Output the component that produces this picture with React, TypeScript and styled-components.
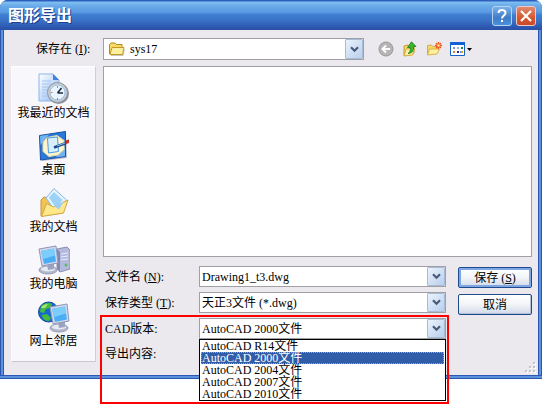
import React, { useState } from "react";
import styled, { createGlobalStyle } from "styled-components";

const GlobalStyle = createGlobalStyle`
  *, *::before, *::after { box-sizing: border-box; }
  body { margin: 0; background: #fff; }
  body, button, input, select {
    font-family: "Liberation Serif", "Noto Sans CJK SC", serif;
    font-size: 12px;
    line-height: 16px;
    color: #000;
  }
`;

const Page = styled.div`
  min-height: 100vh;
  background: #fff;
`;

const Dialog = styled.main`
  padding: 0 4px 4px;
  border-radius: 8px 8px 0 0;
  background: linear-gradient(90deg, #2a55b0 0 1px, #5c92dd 1px 3px, #2c58b4 3px calc(100% - 3px), #5c92dd calc(100% - 3px) calc(100% - 1px), #2a55b0 calc(100% - 1px));
  box-shadow: inset 0 -1px #2a55b0, inset 0 -3px #5c92dd, inset 0 -4px #2c58b4;
`;

const TitleBar = styled.header`
  display: flex;
  align-items: center;
  gap: 4px;
  height: 30px;
  margin: 0 -4px;
  padding: 2px 6px 0 8px;
  border-radius: 8px 8px 0 0;
  background: linear-gradient(#2c5ec0 0 1px, #7fc0f0 2px, #69a9e8 6px, #5a9be4 12px, #3d7dd0 15px, #3a74c8 20px, #2f5cb4 26px, #2a4fa4);
`;

const Title = styled.h1`
  flex: 1;
  margin: 0;
  font-size: 16px;
  line-height: 20px;
  font-weight: 700;
  color: #fff;
  text-shadow: 1px 1px #1d3f8c;
`;

const CaptionButton = styled.button<{ $close?: boolean }>`
  display: grid;
  place-items: center;
  width: 20px;
  height: 20px;
  padding: 0;
  border: 1px solid ${(p) => (p.$close ? "#f0c8c4" : "#b4d4f4")};
  border-radius: 3px;
  background: ${(p) => (p.$close ? "linear-gradient(#e08a70, #d8562c 60%, #c8492a)" : "linear-gradient(#7cb0e8, #3f7cc8 60%, #4a90dc)")};
`;

const Body = styled.div`
  display: flex;
  flex-direction: column;
  gap: 6px;
  padding: 8px 6px 11px 7px;
  background: #ebe9ed;
`;

const Toolbar = styled.div`
  display: flex;
  align-items: center;
  height: 22px;
`;

const LookInLabel = styled.label`
  width: 92px;
  padding-left: 25px;
  white-space: nowrap;
`;

const LookInCell = styled.div`
  flex: 1;
`;

const Tools = styled.div`
  display: flex;
  gap: 4px;
  width: 168px;
  padding-left: 12px;
`;

const ToolButton = styled.button<{ $wide?: boolean }>`
  display: grid;
  place-items: center;
  width: ${(p) => (p.$wide ? "26px" : "20px")};
  height: 20px;
  padding: 0;
  border: 0;
  background: none;
`;

const Columns = styled.div`
  display: flex;
  align-items: flex-start;
  gap: 7px;
`;

const Places = styled.nav`
  display: flex;
  flex-direction: column;
  gap: 8px;
  width: 85px;
  padding: 6px 0 11px;
  border: 1px solid #fff;
  border-right-color: #d0ced6;
  border-bottom-color: #c8c6ce;
  background: #f8f7fc;
`;

const Place = styled.a`
  display: flex;
  flex-direction: column;
  align-items: center;
  height: 49px;
  color: #000;
  text-decoration: none;
  white-space: nowrap;

  svg { flex: none; }
`;

const Content = styled.div`
  flex: 1;
  min-width: 0;
`;

const FileList = styled.div`
  height: 191px;
  border: 1px solid #a0a0a4;
  background: #fff;
`;

const Form = styled.form`
  display: flex;
  gap: 12px;
  padding-top: 9px;
`;

const Fields = styled.div`
  flex: 1;
  display: flex;
  flex-direction: column;
  gap: 5px;
`;

const Row = styled.div`
  display: flex;
  align-items: center;
  height: 21px;
`;

const RowLabel = styled.label`
  width: 96px;
  padding-left: 2px;
  white-space: nowrap;
`;

const Buttons = styled.div`
  display: flex;
  flex-direction: column;
  gap: 6px;
  width: 74px;
  padding-top: 1px;
`;

const ActionButton = styled.button<{ $primary?: boolean }>`
  height: 21px;
  padding: 0;
  border: 1px solid #1f4a8c;
  border-radius: 2px;
  background: linear-gradient(#fff, #f2f4f8 50%, #d0dae8);
  box-shadow: ${(p) => (p.$primary ? "inset 0 0 0 2px #7fa6e4" : "inset -1px -1px #b0c0d8")};
`;

const Combo = styled.div<{ $icon?: boolean }>`
  position: relative;
  flex: 1;
  display: grid;
  grid-template-columns: 1fr 18px;
  height: ${(p) => (p.$icon ? "22px" : "21px")};
  border: 1px solid #a0a0a4;
  background: #fff;

  > select, > input, > button {
    grid-area: 1 / 1 / 2 / 3;
    width: 100%;
    min-width: 0;
    padding: 0 20px 0 ${(p) => (p.$icon ? "26px" : "2px")};
    border: 0;
    outline: 0;
    appearance: none;
    background: transparent;
    text-align: left;
  }

  > svg {
    grid-area: 1 / 1;
    place-self: center start;
    margin-left: 4px;
    pointer-events: none;
  }
`;

const Arrow = styled.span`
  grid-area: 1 / 2;
  display: grid;
  place-items: center;
  border: 1px solid #a8bcd8;
  border-radius: 1px;
  background: linear-gradient(135deg, #eaf3fd, #b9cfec);
  pointer-events: none;
`;

const VersionArea = styled.div`
  position: relative;
  display: flex;
  flex-direction: column;
  gap: 4px;
`;

const Highlight = styled.div`
  position: absolute;
  inset: -3px -3px -40px -3px;
  border: 2px solid #f00;
  pointer-events: none;
`;

const Options = styled.ul`
  position: absolute;
  top: 20px;
  left: -1px;
  right: -1px;
  margin: 0;
  padding: 0;
  border: 1px solid #000;
  background: #fff;
  list-style: none;
`;

const Option = styled.li<{ $selected: boolean }>`
  height: 12px;
  margin: 0 1px;
  padding: 0 1px;
  line-height: 12px;
  color: ${(p) => (p.$selected ? "#fff" : "#000")};
  background: ${(p) => (p.$selected ? "#315ca8" : "#fff")};
  outline: ${(p) => (p.$selected ? "1px dotted #d0a050" : "none")};
  outline-offset: -1px;
`;

const Grip = styled.svg`
  position: absolute;
  right: 1px;
  bottom: 1px;
`;

const Frame = styled.div`
  position: relative;
`;

const ArrowGlyph = () => (
  <Arrow>
    <svg width="9" height="7" viewBox="0 0 9 7">
      <path d="M1 1.2 4.5 4.7 8 1.2" fill="none" stroke="#49597a" strokeWidth="2.2" />
    </svg>
  </Arrow>
);

const FolderIcon = () => (
  <svg width="18" height="16" viewBox="0 0 18 16">
    <path d="M1.500 13V3.500L3 2h4l1.500 1.500H14V6" fill="#f8d968" stroke="#b88a1c" />
    <path d="M2 13.500 4 6.500h12L14.500 13.500z" fill="#fff0a0" stroke="#c79a22" />
    <path d="M3 14.500h12l1.500-6" fill="none" stroke="#8d8b83" opacity=".5" />
  </svg>
);

const BackIcon = () => (
  <svg width="16" height="16" viewBox="0 0 16 16">
    <circle cx="8" cy="8" r="7" fill="#b5b5b5" stroke="#999" />
    <path d="M12 8H5M8 4.500 4.500 8 8 11.500" fill="none" stroke="#fff" strokeWidth="2" />
  </svg>
);

const UpIcon = () => (
  <svg width="16" height="16" viewBox="0 0 16 16">
    <path d="M2 14.500V5l4-1 1 1.500 5 .5v6z" fill="#f5d86c" stroke="#c9982c" />
    <path d="m2 15 2-7 8.500-1-2 7z" fill="#fff0a0" stroke="#d7a93e" />
    <path d="M6 12.500c2-1 2.500-3 2.300-6H5.500L9.500.8 14 5.500h-2.500c.5 4-1.500 7-5.500 7z" fill="#38b82f" stroke="#187c18" strokeWidth=".8" />
  </svg>
);

const NewFolderIcon = () => (
  <svg width="16" height="16" viewBox="0 0 16 16">
    <path d="M1.500 14V4.500l4-.5 1 1.500h5v3" fill="#f5d86c" stroke="#dca94a" />
    <path d="m1.500 14 2-6h10l-2.500 5z" fill="#fff0a0" stroke="#dcb044" />
    <path d="M12.500 1v7M9 4.500h7M10 2l5 5M15 2l-5 5" stroke="#ef5a28" strokeWidth="1.300" />
    <circle cx="12.500" cy="4.500" r="1.300" fill="#ffe38a" />
  </svg>
);

const ViewsIcon = () => (
  <svg width="24" height="16" viewBox="0 0 24 16">
    <path d="M1.500 1.500h14v13h-14z" fill="#fff" stroke="#1660c8" />
    <path d="M1 1h15v3H1z" fill="#0f62d8" />
    <path d="M4 6h2v2H4zM11 10h1v2h-1z" fill="#7890d0" />
    <path d="M8 6h2v2H8z" fill="#9cb0e0" />
    <path d="M12 6h2v2h-2z" fill="#228044" />
    <path d="M4 10h2v2H4z" fill="#e87648" />
    <path d="M8 10h2v2H8z" fill="#202c9c" />
    <path d="M12 10h2v2h-2z" fill="#d8a020" />
    <path d="M18 7h5l-2.500 3z" />
  </svg>
);

const RecentIcon = () => (
  <svg width="32" height="32" viewBox="0 0 32 32">
    <defs>
      <linearGradient id="paper" x2="1" y2="1"><stop stopColor="#fff" /><stop offset="1" stopColor="#8cb9f2" /></linearGradient>
    </defs>
    <path d="M1 1h14l6 6v21H1z" fill="url(#paper)" stroke="#8fb4ec" />
    <path d="M15 1v6h6z" fill="#3e83e0" />
    <path d="M4 8h9M4 11h12M4 14h8M4 17h6M4 20h4M4 23h5" stroke="#a4c4f2" />
    <circle cx="20.500" cy="20.500" r="10.500" fill="#8b919b" />
    <circle cx="19.500" cy="19.500" r="10" fill="#c8ced6" stroke="#8c94a0" />
    <circle cx="19.500" cy="19.500" r="7.500" fill="#eaf6ff" stroke="#9cc0dc" />
    <path d="m19.500 20 4-5M19.500 20h5.500" stroke="#202c40" strokeWidth="1.600" />
    <path d="M19 13h1v2h-1zM19 25h1v2h-1zM12.500 19h2v1h-2z" fill="#ef7434" />
  </svg>
);

const DesktopIcon = () => (
  <svg width="32" height="32" viewBox="0 0 32 32">
    <path d="M3 7 28 3l1 25-25 3z" fill="#8e96a8" opacity=".6" />
    <path d="m1.500 5.500 26-4v25l-25 3.500z" fill="#2a78d8" stroke="#1c50a8" />
    <path d="M2 6 11 4.500 2.500 15zM27 17v9l-9 1.500z" fill="#6fb4f4" />
    <path d="m9 7.500 10-2 7 5v9l-6 5.500-9 1.500-6-5V12.500z" fill="#fff4cc" stroke="#e8dca0" />
    <path d="m9.500 8 10-1 1 14.500-10 1.500z" fill="#d8f0ff" stroke="#4a9ce4" />
    <path d="m16 17.500 12-4.500" stroke="#1d4585" strokeWidth="2.600" />
    <path d="m19 16 8-3" stroke="#80b8ec" strokeWidth="1.200" />
    <path d="m27.500 10.500 3.500-1v3.500l-3 1z" fill="#c8322c" />
  </svg>
);

const DocumentsIcon = () => (
  <svg width="32" height="32" viewBox="0 0 32 32">
    <path d="M3 29V13l3-3 5 1 2 3h14l-2 12z" fill="#f0c452" stroke="#c4963a" />
    <path d="M8 11 16 1.500 28.500 13 18 25z" fill="#e4f4ff" stroke="#8cb8e0" />
    <path d="M11 10.500 16 5l8.500 8-6.500 8z" fill="#9cd2f6" />
    <path d="m3.500 29.500 5-13 7 3.500 14.500-7-4.500 13z" fill="#ffe88c" stroke="#d2a840" />
    <path d="m16 19 5 3.500 5-8z" fill="#9ccff4" />
  </svg>
);

interface MonitorProps {
  x: number;
  y: number;
}

const Monitor = ({ x, y }: MonitorProps) => (
  <g transform={`translate(${x} ${y})`}>
    <ellipse cx="9" cy="24" rx="9" ry="4" fill="#b2b8cc" stroke="#979db6" />
    <ellipse cx="9" cy="23" rx="7" ry="2.500" fill="#e6e8f2" />
    <path d="m8 18 7-1v6l-6 1z" fill="#9aa4c0" />
    <path d="m0 3 17-3 2 17-16 3z" fill="#d3d8ea" stroke="#8c96b8" />
    <path d="m2 5 13-2.500 2 13L5 18z" fill="#4aaef6" />
    <path d="m2 5 13-2.500 1 7L4 13z" fill="#7ccdfc" />
  </g>
);

const ComputerIcon = () => (
  <svg width="32" height="32" viewBox="0 0 32 32">
    <path d="m19 5 10-2 3 3v19l-10 3-3-3z" fill="#b4badc" stroke="#8a90b6" />
    <path d="m19 5 3 3v19l-3-2z" fill="#8288b0" />
    <path d="m23 10 7-1M23 13l7-1M23 16l7-1" stroke="#e9ecff" />
    <circle cx="28" cy="21" r="1.500" fill="#59bf63" />
    <Monitor x={1} y={2} />
  </svg>
);

const NetworkIcon = () => (
  <svg width="32" height="32" viewBox="0 0 32 32">
    <circle cx="10.500" cy="11" r="10" fill="#1769d2" stroke="#164a9e" />
    <path d="M3 5c3-3 8-4 11-2l-2 4-4 1-2 4-4-1zM4 14l5-1 4 4-2 3c-4 0-7-3-7-6z" fill="#46bb3c" />
    <path d="M3 7c2-3 4-4 7-4l-3 4z" fill="#a8e97a" />
    <Monitor x={12} y={3} />
  </svg>
);

const places = [
  { name: "我最近的文档", Icon: RecentIcon },
  { name: "桌面", Icon: DesktopIcon },
  { name: "我的文档", Icon: DocumentsIcon },
  { name: "我的电脑", Icon: ComputerIcon },
  { name: "网上邻居", Icon: NetworkIcon },
];

const versions = ["R14", "2000", "2004", "2007", "2010"].map((v) => `AutoCAD ${v}文件`);

export default function App() {
  const [version, setVersion] = useState(versions[1]);
  const [open, setOpen] = useState(true);

  return (
    <Page>
      <GlobalStyle />
      <Dialog>
        <TitleBar>
          <Title>图形导出</Title>
          <CaptionButton aria-label="帮助">
            <svg width="14" height="16" viewBox="0 0 14 16">
              <path d="M3.500 5c0-4 7-4 7 0 0 2.500-3.500 2.500-3.500 5.500M7 12v2" fill="none" stroke="#fff" strokeWidth="2" />
            </svg>
          </CaptionButton>
          <CaptionButton $close aria-label="关闭">
            <svg width="14" height="14" viewBox="0 0 14 14">
              <path d="m2 2 10 10M12 2 2 12" stroke="#fff" strokeWidth="2.200" />
            </svg>
          </CaptionButton>
        </TitleBar>
        <Frame>
          <Body>
            <Toolbar>
              <LookInLabel htmlFor="folder">保存在 (<u>I</u>):</LookInLabel>
              <LookInCell>
                <Combo $icon>
                  <FolderIcon />
                  <select id="folder"><option>sys17</option></select>
                  <ArrowGlyph />
                </Combo>
              </LookInCell>
              <Tools>
                <ToolButton aria-label="后退"><BackIcon /></ToolButton>
                <ToolButton aria-label="向上一级"><UpIcon /></ToolButton>
                <ToolButton aria-label="新建文件夹"><NewFolderIcon /></ToolButton>
                <ToolButton $wide aria-label="查看"><ViewsIcon /></ToolButton>
              </Tools>
            </Toolbar>
            <Columns>
              <Places>
                {places.map(({ name, Icon }) => (
                  <Place key={name} href="#"><Icon />{name}</Place>
                ))}
              </Places>
              <Content>
                <FileList />
                <Form onSubmit={(e) => e.preventDefault()}>
                  <Fields>
                    <Row>
                      <RowLabel htmlFor="name">文件名 (<u>N</u>):</RowLabel>
                      <Combo>
                        <input id="name" defaultValue="Drawing1_t3.dwg" />
                        <ArrowGlyph />
                      </Combo>
                    </Row>
                    <Row>
                      <RowLabel htmlFor="type">保存类型 (<u>T</u>):</RowLabel>
                      <Combo>
                        <select id="type"><option>天正3文件 (*.dwg)</option></select>
                        <ArrowGlyph />
                      </Combo>
                    </Row>
                    <VersionArea>
                      <Row>
                        <RowLabel htmlFor="version">CAD版本:</RowLabel>
                        <Combo>
                          <button
                            id="version"
                            type="button"
                            role="combobox"
                            aria-expanded={open}
                            aria-controls="versions"
                            onClick={() => setOpen(!open)}
                          >
                            {version}
                          </button>
                          <ArrowGlyph />
                          {open && (
                            <Options id="versions" role="listbox">
                              {versions.map((v) => (
                                <Option
                                  key={v}
                                  role="option"
                                  aria-selected={v === version}
                                  $selected={v === version}
                                  onClick={() => { setVersion(v); setOpen(false); }}
                                >
                                  {v}
                                </Option>
                              ))}
                            </Options>
                          )}
                        </Combo>
                      </Row>
                      <Row><RowLabel as="span">导出内容:</RowLabel></Row>
                      <Highlight />
                    </VersionArea>
                  </Fields>
                  <Buttons>
                    <ActionButton $primary type="submit">保存 (<u>S</u>)</ActionButton>
                    <ActionButton type="button">取消</ActionButton>
                  </Buttons>
                </Form>
              </Content>
            </Columns>
          </Body>
          <Grip width="12" height="12" viewBox="0 0 12 12">
            <path d="M9 1h2v2H9zM5 5h2v2H5zM9 5h2v2H9zM1 9h2v2H1zM5 9h2v2H5zM9 9h2v2H9z" fill="#fff" />
            <path d="M8 0h2v2H8zM4 4h2v2H4zM8 4h2v2H8zM0 8h2v2H0zM4 8h2v2H4zM8 8h2v2H8z" fill="#c4c2ca" />
          </Grip>
        </Frame>
      </Dialog>
    </Page>
  );
}
